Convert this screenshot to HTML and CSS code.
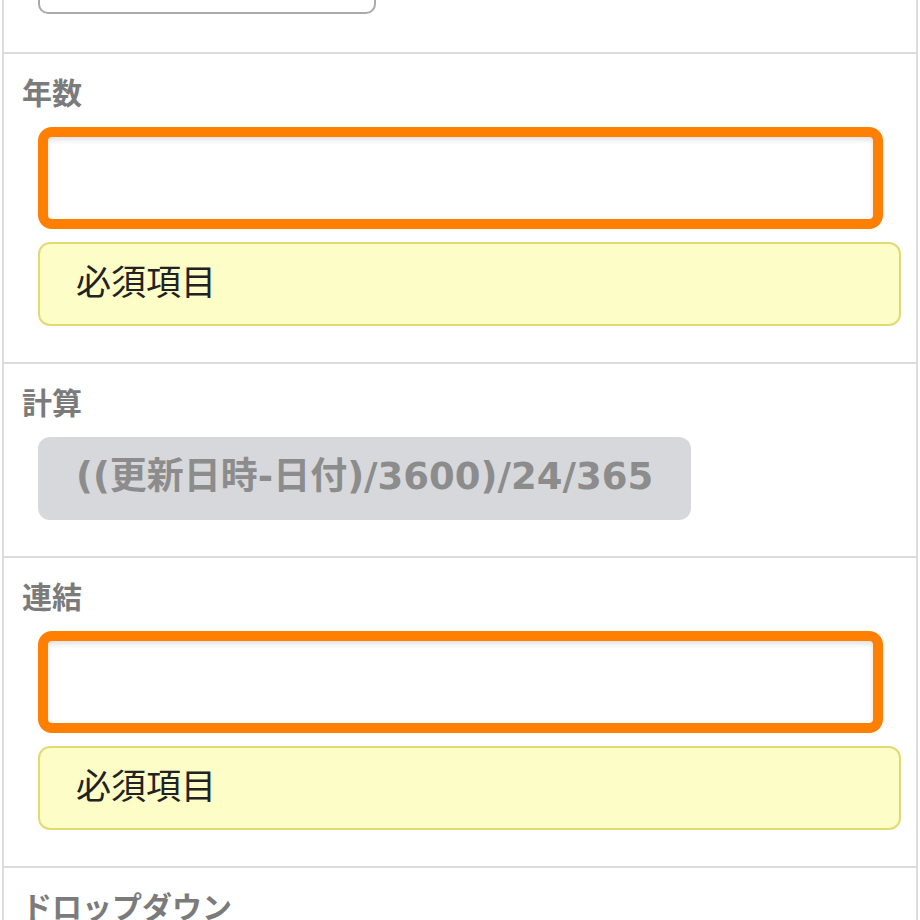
FILE: index.html
```html
<!DOCTYPE html>
<html lang="ja">
<head>
<meta charset="utf-8">
<link rel="stylesheet" href="styles.css">
</head>
<body>
<div class="form">
  <div class="section section-top">
    <div class="field">
      <div class="input-fragment"></div>
    </div>
  </div>
  <div class="section">
    <div class="label">年数</div>
    <div class="field">
      <div class="input-error"></div>
      <div class="notice">必須項目</div>
    </div>
  </div>
  <div class="section">
    <div class="label">計算</div>
    <div class="field">
      <div class="calc">((更新日時-日付)/3600)/24/365</div>
    </div>
  </div>
  <div class="section">
    <div class="label">連結</div>
    <div class="field">
      <div class="input-error"></div>
      <div class="notice">必須項目</div>
    </div>
  </div>
  <div class="section">
    <div class="label">ドロップダウン</div>
  </div>
</div>
</body>
</html>
```
FILE: styles.css
```css
html, body {
  margin: 0;
  padding: 0;
  background: #ffffff;
}
body {
  font-family: "Noto Sans CJK JP", "Noto Sans", sans-serif;
  height: 920px;
  overflow: hidden;
}
.form {
  margin-left: 2px;
  width: 916px;
  box-sizing: border-box;
  border-left: 2px solid #dddddd;
  border-right: 2px solid #dddddd;
  min-height: 920px;
}
.section {
  border-top: 2px solid #dcdcdc;
  padding: 18px 15px 36px 18px;
}
.section-top {
  border-top: none;
  padding: 0 15px 38px 18px;
}
.field {
  padding-left: 16px;
  display: flex;
  flex-direction: column;
  align-items: flex-start;
  gap: 13px;
}
.input-fragment {
  width: 338px;
  height: 14px;
  box-sizing: border-box;
  border: 2px solid #aaaaaa;
  border-top: none;
  border-radius: 0 0 10px 10px;
}
.label {
  font-size: 30px;
  line-height: 38px;
  height: 40px;
  font-weight: 700;
  color: #7b7b7b;
  margin-bottom: 15px;
}
.input-error {
  width: 845px;
  height: 102px;
  box-sizing: border-box;
  border: 10px solid #ff7f00;
  border-radius: 14px;
  background: #ffffff;
  box-shadow: inset 0 3px 5px rgba(0, 0, 0, 0.12);
}
.notice {
  width: 100%;
  height: 84px;
  box-sizing: border-box;
  background: #fcfdc7;
  border: 2px solid #e2db74;
  border-radius: 12px;
  padding-left: 36px;
  font-size: 35px;
  line-height: 72px;
  color: #222222;
}
.calc {
  width: 653px;
  height: 83px;
  box-sizing: border-box;
  background: #d7d8db;
  border-radius: 12px;
  padding-left: 38px;
  font-family: "DejaVu Sans", "Noto Sans CJK JP", sans-serif;
  font-size: 37px;
  line-height: 79px;
  font-weight: 700;
  color: #8c8c8c;
  white-space: nowrap;
}
```
